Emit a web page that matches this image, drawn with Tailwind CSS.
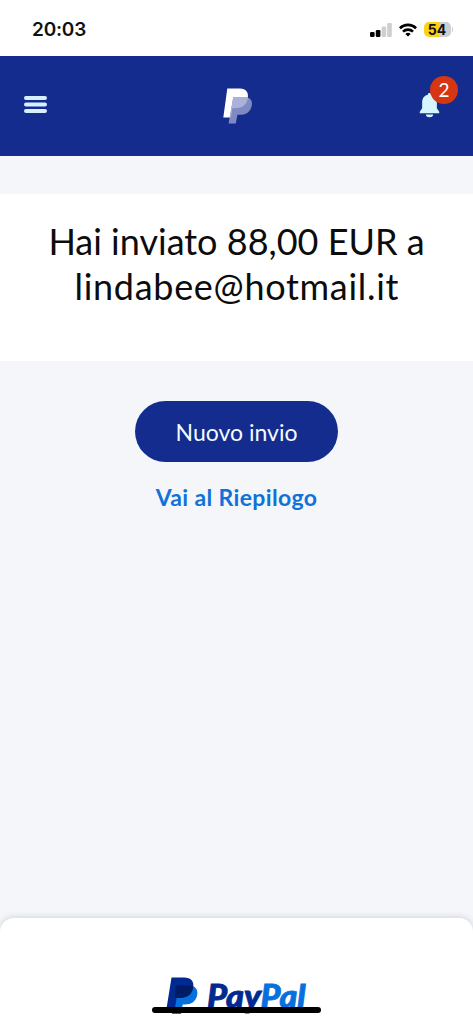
<!DOCTYPE html>
<html lang="it">
<head>
<meta charset="utf-8">
<meta name="viewport" content="width=device-width, initial-scale=1">
<title>PayPal</title>
<script src="https://cdn.jsdelivr.net/npm/@tailwindcss/browser@4"></script>
</head>
<body class="bg-white">
<div class="flex h-[1024px] w-[473px] flex-col overflow-hidden bg-[#f4f6fa] font-['Lato',sans-serif]">
  <!-- Status bar -->
  <div class="flex h-14 shrink-0 items-center justify-between bg-white pr-5 pl-8 pt-[3px] font-['Inter',sans-serif]">
    <span class="text-[19px] font-semibold leading-none tracking-[-0.2px] text-[#111]">20:03</span>
    <div class="flex items-center gap-[7px]">
      <svg class="h-[14px] w-[22px]" viewBox="0 0 22 14">
        <rect x="0" y="9" width="4.6" height="5" rx="1.2" fill="#000"/>
        <rect x="5.8" y="7" width="4.6" height="7" rx="1.2" fill="#000"/>
        <rect x="11.6" y="3.6" width="4.6" height="10.4" rx="1.2" fill="#cfcfcf"/>
        <rect x="17.2" y="0" width="4.6" height="14" rx="1.2" fill="#cfcfcf"/>
      </svg>
      <svg class="h-[14px] w-[18px]" viewBox="0 0 18 14" fill="none" stroke="#000" stroke-width="2.6">
        <path d="M.9 5.2a11.6 11.6 0 0 1 16.2 0"/>
        <path d="M4 8.6a7.2 7.2 0 0 1 10 0"/>
        <path d="M9 13.6 6.3 11a4 4 0 0 1 5.4 0z" fill="#000" stroke="none"/>
      </svg>
      <div class="flex items-center gap-px">
        <div class="flex h-[15px] w-[27px] items-center justify-center rounded-[5px] bg-linear-to-r from-[#fcd116] from-55% to-[#cdced3] to-55% text-[14px] font-bold leading-none text-[#111]">54</div>
        <div class="h-[5px] w-[1.5px] rounded-r-full bg-[#cdced3]"></div>
      </div>
    </div>
  </div>

  <!-- Navigation -->
  <header class="grid h-[100px] shrink-0 grid-cols-3 items-center bg-[#142c8e] pr-[15px] pl-6">
    <svg class="mb-[3px] h-[17px] w-[23px]" viewBox="0 0 23 17" fill="#d6f0ff">
      <rect width="23" height="4" rx="2"/><rect y="6.5" width="23" height="4" rx="2"/><rect y="13" width="23" height="4" rx="2"/>
    </svg>
    <svg class="mr-[6px] h-9 w-[30px] justify-self-center" viewBox="0 0 30 36">
      <path d="M4.300.5H17C23 .5 25.800 4.500 24.800 9.800 23.600 16.500 19 20.300 12.500 20.300H9.400L7.900 29.500H.3z" fill="#fff"/>
      <path d="M10.300 9h11c5.700 0 8.500 3.500 7.500 8.500-1.200 6-5.200 9.300-11.700 9.300h-2.700L12.800 35.500H5.600z" fill="#7f8ac3"/>
      <path d="M10.300 9h11q2 0 3.600.5C24.100 16.500 19.500 20.300 12.500 20.300H9.400L7.900 29.500H6.700z" fill="#aab1da"/>
    </svg>
    <div class="relative -top-2 h-[44px] w-[41px] justify-self-end">
      <svg class="absolute left-[2px] top-[17px] h-[25px] w-[21px]" viewBox="0 0 22 26" fill="#d6f5ff">
        <path d="M11 0c1 0 1.800.7 1.800 1.800C17 2.800 18.700 6 18.700 10v6l2.500 3.500V21H.8v-1.500L3.300 16v-6c0-4 1.700-7.200 5.900-8.200C9.200.7 10 0 11 0zM7.200 22.500h7.600a3.800 2.800 0 0 1-7.600 0z"/>
      </svg>
      <div class="absolute right-0 top-0 flex size-7 items-center justify-center rounded-full bg-[#d63612] pb-[2px] text-[19px] leading-none text-white">2</div>
    </div>
  </header>

  <!-- Confirmation -->
  <main class="flex grow flex-col items-center">
    <h1 class="mt-[38px] h-[167px] w-full bg-white pt-[25px] text-center text-[36px] leading-[45px] text-[#0c0c0d]">
      <span class="block whitespace-nowrap">Hai inviato 88,00 EUR a</span>
      <span class="-mr-[0.7px] block whitespace-nowrap tracking-[0.7px]">lindabee@hotmail.it</span>
    </h1>
    <button class="mt-10 h-[61px] w-[203px] rounded-full bg-[#142c8e] pt-[2px] text-[23px] text-[#f2fbff]">Nuovo invio</button>
    <a class="mt-5 text-[23px] font-bold leading-[30px] tracking-[0.35px] text-[#1072d8]">Vai al Riepilogo</a>
  </main>

  <!-- Footer -->
  <footer class="relative flex h-[106px] shrink-0 justify-center rounded-t-[14px] bg-white pt-[59px] shadow-[0_-1px_6px_rgba(40,45,60,0.16)]">
    <svg class="h-[47px] w-[142px]" viewBox="0 0 142 47">
      <path d="M9.500 8.500h13.300c6.500 0 9.500 4 8.400 9.500-1.300 6.500-5.800 9.500-12.500 9.500h-2L15 37H6z" fill="#0570de"/>
      <path d="M5.500.500H18c7 0 10.400 4 9.200 10-1.300 7-6 10.200-13 10.200H10.700L9 30.500H.7z" fill="#002991"/>
      <path d="M9.600 8.500h13.200q2.400 0 4.500.900c-.8 7.600-5.800 11.300-13.100 11.300h-5.300z" fill="#001c64"/>
      <g font-family="Lato" font-size="32" font-weight="900" font-style="italic" stroke-width=".8">
        <text x="41" y="31" textLength="54" lengthAdjust="spacingAndGlyphs" fill="#002991" stroke="#002991">Pay</text>
        <text x="94.500" y="31" textLength="45" lengthAdjust="spacingAndGlyphs" fill="#0570de" stroke="#0570de">Pal</text>
      </g>
    </svg>
    <div class="absolute left-[152px] top-[89px] h-[6px] w-[169px] rounded-full bg-black"></div>
  </footer>
</div>
</body>
</html>
